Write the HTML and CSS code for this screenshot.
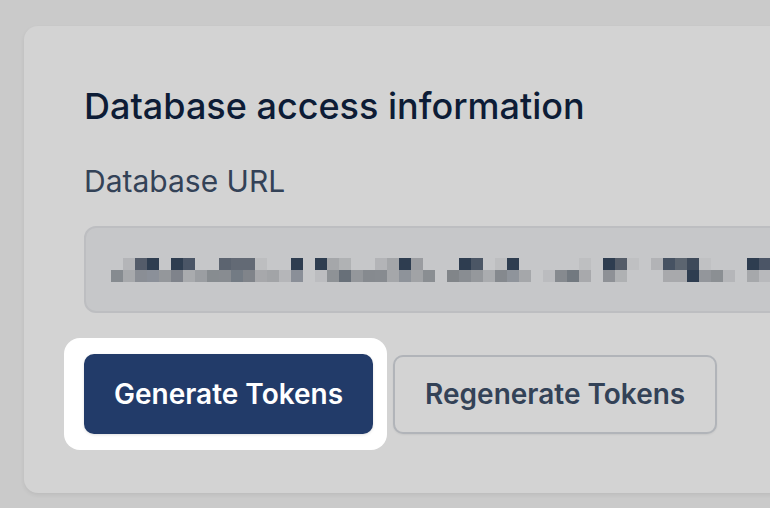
FILE: index.html
```html
<!DOCTYPE html>
<html lang="en">
<head>
<meta charset="utf-8">
<title>Database access information</title>
<link rel="stylesheet" href="styles.css">
</head>
<body>
<main class="page">
  <section class="card">
    <h2 class="card-title">Database access information</h2>
    <label class="field-label">Database URL</label>
    <div class="url-field">
      <svg class="mosaic" width="672" height="24" viewBox="0 0 672 24" aria-label="Database URL (redacted)">
        <g>
          <rect x="12" y="0" width="12" height="12" fill="#b4b5b8"/>
          <rect x="24" y="0" width="12" height="12" fill="#545c6a"/>
          <rect x="36" y="0" width="12" height="12" fill="#2e3d50"/>
          <rect x="60" y="0" width="12" height="12" fill="#2e3d50"/>
          <rect x="72" y="0" width="12" height="12" fill="#4a5566"/>
          <rect x="108" y="0" width="12" height="12" fill="#5c6470"/>
          <rect x="120" y="0" width="12" height="12" fill="#636a75"/>
          <rect x="132" y="0" width="12" height="12" fill="#636a75"/>
          <rect x="144" y="0" width="12" height="12" fill="#bdbec0"/>
          <rect x="180" y="0" width="12" height="12" fill="#2e3d50"/>
          <rect x="204" y="0" width="12" height="12" fill="#2e3d50"/>
          <rect x="216" y="0" width="12" height="12" fill="#a5a7aa"/>
          <rect x="228" y="0" width="12" height="12" fill="#b0b2b4"/>
          <rect x="264" y="0" width="12" height="12" fill="#b3b4b7"/>
          <rect x="276" y="0" width="12" height="12" fill="#a4a6a9"/>
          <rect x="288" y="0" width="12" height="12" fill="#2e3d50"/>
          <rect x="300" y="0" width="12" height="12" fill="#9a9ca0"/>
          <rect x="348" y="0" width="12" height="12" fill="#2e3d50"/>
          <rect x="360" y="0" width="12" height="12" fill="#4b5665"/>
          <rect x="384" y="0" width="12" height="12" fill="#bdbec0"/>
          <rect x="396" y="0" width="12" height="12" fill="#2e3d50"/>
          <rect x="468" y="0" width="12" height="12" fill="#bebfc1"/>
          <rect x="492" y="0" width="12" height="12" fill="#2e3d50"/>
          <rect x="504" y="0" width="12" height="12" fill="#545c68"/>
          <rect x="516" y="0" width="12" height="12" fill="#bfc0c2"/>
          <rect x="540" y="0" width="12" height="12" fill="#b2b3b6"/>
          <rect x="552" y="0" width="12" height="12" fill="#465262"/>
          <rect x="564" y="0" width="12" height="12" fill="#5c6570"/>
          <rect x="576" y="0" width="12" height="12" fill="#3e4a5a"/>
          <rect x="588" y="0" width="12" height="12" fill="#c0c1c3"/>
          <rect x="636" y="0" width="12" height="12" fill="#2e3d50"/>
          <rect x="648" y="0" width="12" height="12" fill="#4b5566"/>
        </g>
        <g>
          <rect x="0" y="12" width="12" height="12" fill="#868b90"/>
          <rect x="12" y="12" width="12" height="12" fill="#a7a9ac"/>
          <rect x="24" y="12" width="12" height="12" fill="#8a8e95"/>
          <rect x="36" y="12" width="12" height="12" fill="#8b9099"/>
          <rect x="48" y="12" width="12" height="12" fill="#94979b"/>
          <rect x="60" y="12" width="12" height="12" fill="#7f838b"/>
          <rect x="72" y="12" width="12" height="12" fill="#a9abae"/>
          <rect x="84" y="12" width="12" height="12" fill="#9b9ea2"/>
          <rect x="96" y="12" width="12" height="12" fill="#878c90"/>
          <rect x="108" y="12" width="12" height="12" fill="#888c91"/>
          <rect x="120" y="12" width="12" height="12" fill="#737b84"/>
          <rect x="132" y="12" width="12" height="12" fill="#80848a"/>
          <rect x="144" y="12" width="12" height="12" fill="#a7a8ab"/>
          <rect x="156" y="12" width="12" height="12" fill="#a2a4a7"/>
          <rect x="168" y="12" width="12" height="12" fill="#b5b6b9"/>
          <rect x="180" y="12" width="12" height="12" fill="#8a8f98"/>
          <rect x="204" y="12" width="12" height="12" fill="#bcbdc0"/>
          <rect x="216" y="12" width="12" height="12" fill="#8e9296"/>
          <rect x="228" y="12" width="12" height="12" fill="#687079"/>
          <rect x="240" y="12" width="12" height="12" fill="#94979b"/>
          <rect x="252" y="12" width="12" height="12" fill="#868a8f"/>
          <rect x="264" y="12" width="12" height="12" fill="#878b90"/>
          <rect x="276" y="12" width="12" height="12" fill="#a5a7aa"/>
          <rect x="288" y="12" width="12" height="12" fill="#8e939a"/>
          <rect x="300" y="12" width="12" height="12" fill="#a1a3a6"/>
          <rect x="312" y="12" width="12" height="12" fill="#8a8e92"/>
          <rect x="336" y="12" width="12" height="12" fill="#818589"/>
          <rect x="348" y="12" width="12" height="12" fill="#898d92"/>
          <rect x="360" y="12" width="12" height="12" fill="#95989c"/>
          <rect x="372" y="12" width="12" height="12" fill="#aaacaf"/>
          <rect x="384" y="12" width="12" height="12" fill="#85898e"/>
          <rect x="396" y="12" width="12" height="12" fill="#8f949b"/>
          <rect x="408" y="12" width="12" height="12" fill="#a5a7aa"/>
          <rect x="432" y="12" width="12" height="12" fill="#bbbcbf"/>
          <rect x="444" y="12" width="12" height="12" fill="#868a8f"/>
          <rect x="456" y="12" width="12" height="12" fill="#727980"/>
          <rect x="468" y="12" width="12" height="12" fill="#a8a9ac"/>
          <rect x="492" y="12" width="12" height="12" fill="#8e9196"/>
          <rect x="504" y="12" width="12" height="12" fill="#afb1b3"/>
          <rect x="552" y="12" width="12" height="12" fill="#a8a9ac"/>
          <rect x="564" y="12" width="12" height="12" fill="#a8a9ac"/>
          <rect x="576" y="12" width="12" height="12" fill="#2e3d50"/>
          <rect x="588" y="12" width="12" height="12" fill="#93969b"/>
          <rect x="600" y="12" width="12" height="12" fill="#8b8f93"/>
          <rect x="612" y="12" width="12" height="12" fill="#b5b6b9"/>
          <rect x="636" y="12" width="12" height="12" fill="#a6a8ab"/>
          <rect x="648" y="12" width="12" height="12" fill="#b8b9bc"/>
        </g>
      </svg>
    </div>
    <div class="actions">
      <div class="focus-ring">
        <button class="btn btn-primary" type="button">Generate Tokens</button>
      </div>
      <button class="btn btn-secondary" type="button">Regenerate Tokens</button>
    </div>
  </section>
</main>
</body>
</html>
```

FILE: styles.css
```css
* {
  box-sizing: border-box;
}

html, body {
  margin: 0;
  padding: 0;
}

body {
  background: #cacaca;
  font-family: Inter, "Noto Sans", sans-serif;
  width: 770px;
  height: 508px;
  overflow: hidden;
}

.page {
  padding: 26px 0 0 24px;
}

.card {
  width: 820px;
  background: #d3d3d3;
  border-radius: 14px;
  box-shadow: 0 2px 4px rgba(0, 0, 0, 0.07);
  padding: 56px 0 43px 60px;
  display: flex;
  flex-direction: column;
}

.card-title {
  margin: 0;
  font-size: 36px;
  line-height: 48px;
  font-weight: 500;
  color: #0d1c36;
}

.field-label {
  margin-top: 31px;
  font-size: 30px;
  line-height: 40px;
  font-weight: 400;
  color: #334257;
}

.url-field {
  margin-top: 25px;
  height: 87px;
  background: #c6c7c9;
  border: 2px solid #bdbec1;
  border-radius: 12px;
  display: flex;
  align-items: center;
  padding-left: 25px;
}

.mosaic {
  display: block;
  flex: none;
}

.actions {
  margin-top: 25px;
  display: flex;
  align-items: center;
  gap: 6px;
}

.focus-ring {
  margin-left: -20px;
  background: #ffffff;
  border-radius: 16px;
  padding: 16px 14px 16px 20px;
}

.btn {
  height: 80px;
  padding: 0 30px;
  border-radius: 10px;
  font-family: Inter, "Noto Sans", sans-serif;
  font-size: 28px;
  font-weight: 600;
  cursor: pointer;
}

.btn-primary {
  display: block;
  background: #223b69;
  color: #ffffff;
  border: none;
  box-shadow: 0 1px 3px rgba(0, 0, 0, 0.12);
}

.btn-secondary {
  height: 79px;
  background: #d3d3d3;
  color: #334257;
  border: 2px solid #b1b4b9;
  box-shadow: 0 1px 2px rgba(0, 0, 0, 0.06);
}
```
